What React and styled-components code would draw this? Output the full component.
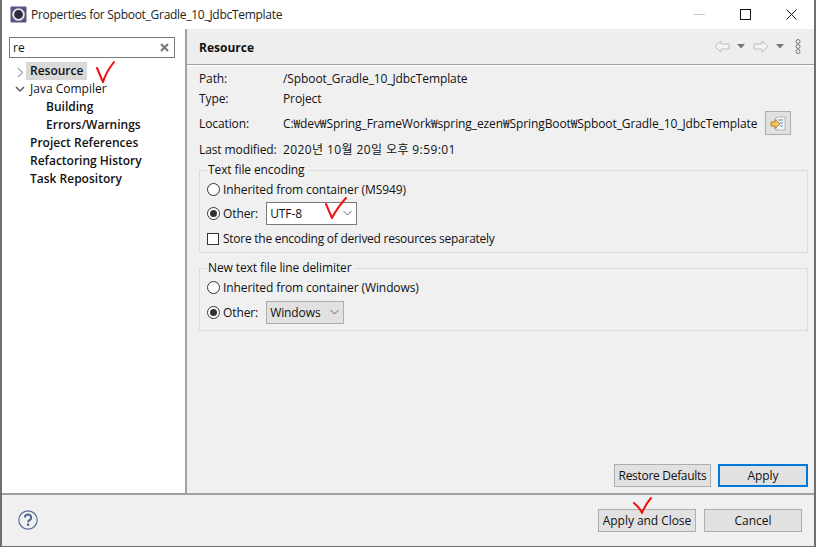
import React from "react";
import styled, { createGlobalStyle } from "styled-components";

const Global = createGlobalStyle`
  html, body { margin: 0; padding: 0; background: #fff; }
  body { font-family: "Open Sans", "Noto Sans CJK KR", sans-serif; font-size: 12px; color: #111; }
  * { box-sizing: border-box; }
`;

const Dialog = styled.div`
  width: 816px;
  height: 547px;
  position: relative;
  display: flex;
  flex-direction: column;
  background: #fff;
  border-left: 2px solid #6f6f6f;
  border-right: 2px solid #6f6f6f;
  border-bottom: 1px solid #6f6f6f;
  overflow: hidden;
`;

const TitleBar = styled.div`
  height: 29px;
  display: flex;
  align-items: center;
  padding-left: 8px;
  gap: 4px;
  flex-shrink: 0;
`;

const TitleText = styled.div`
  flex: 1;
  font-size: 12px;
  letter-spacing: -0.28px;
  color: #222;
`;

const WinControls = styled.div`
  display: flex;
`;

const WinButton = styled.div`
  width: 46px;
  height: 29px;
  display: flex;
  align-items: center;
  justify-content: center;
`;

const Body = styled.div`
  flex: 1;
  display: flex;
  min-height: 0;
`;

const Sidebar = styled.div`
  width: 185px;
  background: #fff;
  border-right: 2px solid #a0a0a0;
  padding: 8px 8px 0 7px;
`;

const Search = styled.div`
  height: 21px;
  width: 166px;
  border: 1px solid #7a7a7a;
  display: flex;
  align-items: center;
  justify-content: space-between;
  padding: 0 5px 0 3px;
  margin-bottom: 3px;
`;

const Row = styled.div`
  height: 18px;
  display: flex;
  align-items: center;
  padding-left: ${(p) => p.$indent}px;
  position: relative;
  font-weight: ${(p) => (p.$bold ? 600 : 400)};
  white-space: nowrap;
`;

const Twist = styled.span`
  position: absolute;
  left: ${(p) => p.$left}px;
  top: 6px;
  display: flex;
`;

const Selected = styled.span`
  background: #d9d9d9;
  padding: 0 4px;
  height: 18px;
  line-height: 18px;
  margin: 2px 0 0 -4px;
`;

const Main = styled.div`
  flex: 1;
  background: #f0f0f0;
  display: flex;
  flex-direction: column;
  min-width: 0;
  letter-spacing: -0.1px;
`;

const HeaderBand = styled.div`
  height: 36px;
  flex-shrink: 0;
  background: #eeeeee;
  border-bottom: 1px solid #a0a0a0;
  box-shadow: 0 1px 0 #fff;
  display: flex;
  align-items: center;
  justify-content: space-between;
  padding: 0 13px 0 12px;
`;

const HeaderTitle = styled.div`
  font-weight: 700;
  font-size: 12px;
  letter-spacing: 0;
  padding-top: 2px;
`;

const NavIcons = styled.div`
  display: flex;
  align-items: center;
  gap: 8px;
`;

const NavGroup = styled.div`
  display: flex;
  align-items: center;
  gap: 7px;
`;

const NavArrow = styled.svg`
  transform: ${(p) => (p.$flip ? "scaleX(-1)" : "none")};
`;

const Dots = styled.svg`
  margin-left: 3px;
`;

const Content = styled.div`
  flex: 1;
  display: flex;
  flex-direction: column;
  padding: 3px 6px 6px 12px;
  min-height: 0;
`;

const InfoRow = styled.div`
  display: grid;
  grid-template-columns: 84px 1fr;
  align-items: center;
  height: ${(p) => p.$h}px;
`;

const LocationValue = styled.div`
  display: flex;
  align-items: center;
  justify-content: space-between;
  padding-right: 17px;
  white-space: nowrap;
`;

const DateValue = styled.span`
  letter-spacing: 0.4px;
`;

const IconButton = styled.div`
  width: 26px;
  height: 24px;
  background: #e1e1e1;
  border: 1px solid #adadad;
  display: flex;
  align-items: center;
  justify-content: center;
`;

const Group = styled.fieldset`
  margin: ${(p) => p.$top}px 0 0;
  padding: 1px 7px 0 7px;
  height: ${(p) => p.$h}px;
  border: 1px solid #dcdcdc;
  min-width: 0;
`;

const Legend = styled.legend`
  padding: 0 3px 0 1px;
  margin-left: 0;
  line-height: 14px;
`;

const OptionRow = styled.div`
  height: ${(p) => p.$h}px;
  display: flex;
  align-items: center;
  gap: 3px;
  letter-spacing: ${(p) => (p.$tight ? "-0.26px" : "inherit")};
`;

const Radio = styled.span`
  width: 13px;
  height: 13px;
  border-radius: 50%;
  border: 1px solid #333;
  background: #fff;
  display: flex;
  align-items: center;
  justify-content: center;
  flex-shrink: 0;
  &::after {
    content: "";
    display: ${(p) => (p.$on ? "block" : "none")};
    width: 7px;
    height: 7px;
    border-radius: 50%;
    background: #333;
  }
`;

const Check = styled.span`
  width: 12px;
  height: 12px;
  border: 1px solid #333;
  background: #fff;
  flex-shrink: 0;
  margin-right: 1px;
`;

const Combo = styled.div`
  width: ${(p) => p.$w}px;
  height: 23px;
  margin-left: 5px;
  display: flex;
  align-items: center;
  justify-content: space-between;
  padding: 0 4px 0 3px;
  background: ${(p) => (p.$gray ? "#e1e1e1" : "#fff")};
  border: 1px solid ${(p) => (p.$gray ? "#adadad" : "#7a7a7a")};
`;

const Spacer = styled.div`
  flex: 1;
`;

const ButtonRow = styled.div`
  display: flex;
  justify-content: flex-end;
  gap: 7px;
`;

const Button = styled.div`
  width: ${(p) => p.$w}px;
  height: ${(p) => p.$h}px;
  background: #e1e1e1;
  border: ${(p) => (p.$primary ? "2px solid #0078d7" : "1px solid #adadad")};
  display: flex;
  align-items: center;
  justify-content: center;
  white-space: nowrap;
  letter-spacing: ${(p) => (p.$tight ? "-0.3px" : "-0.05px")};
`;

const Footer = styled.div`
  height: 53px;
  flex-shrink: 0;
  background: #f0f0f0;
  border-top: 2px solid #a0a0a0;
  display: flex;
  align-items: center;
  justify-content: space-between;
  padding: 0 12px 0 15px;
`;

const HelpIcon = styled.svg`
  margin: -2px 0 0 1px;
`;

const FooterButtons = styled.div`
  display: flex;
  gap: 8px;
`;

const Tick = styled.svg`
  position: absolute;
  left: ${(p) => p.$x}px;
  top: ${(p) => p.$y}px;
  overflow: visible;
  pointer-events: none;
`;

const Chevron = ({ color = "#666" }) => (
  <svg width="9" height="6" viewBox="0 0 9 6">
    <path d="M0.5 1l4 4 4-4" fill="none" stroke={color} strokeWidth="1" />
  </svg>
);

const Arrow = ({ flip }) => (
  <NavArrow $flip={flip} width="16" height="13" viewBox="0 0 16 13">
    <path d="M1 6.5L7 1v3h8v5H7v3z" fill="#f4f4f4" stroke="#bdbdbd" />
  </NavArrow>
);

const Caret = () => (
  <svg width="8" height="5" viewBox="0 0 8 5">
    <path d="M0 0h8L4 4.5z" fill="#777" />
  </svg>
);

// the hand-drawn red marks sit over the dialog; x/y are relative to its inner edge
const RedTick = ({ x, y, d }) => (
  <Tick $x={x} $y={y} width="24" height="24" viewBox="0 0 24 24">
    <path d={d} fill="none" stroke="#f01010" strokeWidth="2" strokeLinecap="round" strokeLinejoin="round" />
  </Tick>
);

export default function App() {
  return (
    <Dialog>
      <Global />
      <TitleBar>
        <svg width="17" height="17" viewBox="0 0 17 17">
          <rect x="0.5" y="0.5" width="16" height="16" rx="1" fill="#5f4f82" />
          <circle cx="8.5" cy="8.5" r="6.3" fill="#e4e4e4" />
          <circle cx="8.5" cy="8.5" r="4.4" fill="#2c2c3c" />
        </svg>
        <TitleText>Properties for Spboot_Gradle_10_JdbcTemplate</TitleText>
        <WinControls>
          <WinButton>
            <svg width="11" height="1"><rect width="11" height="1" fill="#c4c4c4" /></svg>
          </WinButton>
          <WinButton>
            <svg width="11" height="11"><rect x="0.5" y="0.5" width="10" height="10" fill="none" stroke="#111" /></svg>
          </WinButton>
          <WinButton>
            <svg width="11" height="11"><path d="M0.5 0.5l10 10M10.5 0.5l-10 10" stroke="#111" /></svg>
          </WinButton>
        </WinControls>
      </TitleBar>
      <Body>
        <Sidebar>
          <Search>
            <span>re</span>
            <svg width="9" height="9" viewBox="0 0 9 9">
              <path d="M1 1l7 7M8 1L1 8" stroke="#777" strokeWidth="2" />
            </svg>
          </Search>
          <Row $indent={21} $bold>
            <Twist $left={8}>
              <svg width="7" height="11" viewBox="0 0 7 11">
                <path d="M1 1l4.5 4.5L1 10" fill="none" stroke="#aaa" strokeWidth="1.4" />
              </svg>
            </Twist>
            <Selected>Resource</Selected>
          </Row>
          <Row $indent={21}>
            <Twist $left={6}>
              <svg width="10" height="9" viewBox="0 0 10 9">
                <path d="M1 2l4 4 4-4" fill="none" stroke="#555" strokeWidth="1.4" />
              </svg>
            </Twist>
            Java Compiler
          </Row>
          <Row $indent={37} $bold>Building</Row>
          <Row $indent={37} $bold>Errors/Warnings</Row>
          <Row $indent={21} $bold>Project References</Row>
          <Row $indent={21} $bold>Refactoring History</Row>
          <Row $indent={21} $bold>Task Repository</Row>
        </Sidebar>
        <Main>
          <HeaderBand>
            <HeaderTitle>Resource</HeaderTitle>
            <NavIcons>
              <NavGroup><Arrow /><Caret /></NavGroup>
              <NavGroup><Arrow flip /><Caret /></NavGroup>
              <Dots width="6" height="15" viewBox="0 0 6 15">
                <g fill="none" stroke="#777">
                  <circle cx="3" cy="2.5" r="2" />
                  <circle cx="3" cy="7.5" r="2" />
                  <circle cx="3" cy="12.5" r="2" />
                </g>
              </Dots>
            </NavIcons>
          </HeaderBand>
          <Content>
            <InfoRow $h={20}><span>Path:</span><span>/Spboot_Gradle_10_JdbcTemplate</span></InfoRow>
            <InfoRow $h={20}><span>Type:</span><span>Project</span></InfoRow>
            <InfoRow $h={30}>
              <span>Location:</span>
              <LocationValue>
                C:₩dev₩Spring_FrameWork₩spring_ezen₩SpringBoot₩Spboot_Gradle_10_JdbcTemplate
                <IconButton>
                  <svg width="16" height="15" viewBox="0 0 16 15">
                    <rect x="6" y="1" width="9" height="13" fill="#f7f7f7" stroke="#b5b5b5" />
                    <path d="M8 4h5M10 7h3M10 10h3" stroke="#5a7fb5" />
                    <path d="M1 6h4V3.5L10 8l-5 4.5V10H1z" fill="#f3c766" stroke="#b07f1e" />
                  </svg>
                </IconButton>
              </LocationValue>
            </InfoRow>
            <InfoRow $h={22}><span>Last modified:</span><DateValue>2020년 10월 20일 오후 9:59:01</DateValue></InfoRow>
            <Group $top={3} $h={90}>
              <Legend>Text file encoding</Legend>
              <OptionRow $h={22}><Radio />Inherited from container (MS949)</OptionRow>
              <OptionRow $h={26}>
                <Radio $on />Other:
                <Combo $w={91}>UTF-8<Chevron /></Combo>
              </OptionRow>
              <OptionRow $h={25} $tight><Check />Store the encoding of derived resources separately</OptionRow>
            </Group>
            <Group $top={8} $h={70}>
              <Legend>New text file line delimiter</Legend>
              <OptionRow $h={22}><Radio />Inherited from container (Windows)</OptionRow>
              <OptionRow $h={28}>
                <Radio $on />Other:
                <Combo $w={78} $gray>Windows<Chevron /></Combo>
              </OptionRow>
            </Group>
            <Spacer />
            <ButtonRow>
              <Button $w={97} $h={23} $tight>Restore Defaults</Button>
              <Button $w={90} $h={23} $primary>Apply</Button>
            </ButtonRow>
          </Content>
        </Main>
      </Body>
      <Footer>
        <HelpIcon width="20" height="20" viewBox="0 0 20 20">
          <circle cx="10" cy="10" r="9.2" fill="none" stroke="#5a6f94" strokeWidth="1.2" />
          <path d="M6.8 7.5a3.2 3 0 1 1 4.8 2.6c-1 .6-1.6 1.1-1.6 2.2" fill="none" stroke="#4a5f86" strokeWidth="2" />
          <rect x="9" y="13.6" width="2.2" height="2.2" fill="#4a5f86" />
        </HelpIcon>
        <FooterButtons>
          <Button $w={98} $h={23}>Apply and Close</Button>
          <Button $w={98} $h={23}>Cancel</Button>
        </FooterButtons>
      </Footer>
      <RedTick x={95} y={62} d="M0 6L6 20Q9 10 17 0" />
      <RedTick x={324} y={198} d="M0 6L6 20Q11 10 20 0" />
      <RedTick x={632} y={498} d="M0 5Q6 10 8 15Q11 7 17 0" />
    </Dialog>
  );
}
